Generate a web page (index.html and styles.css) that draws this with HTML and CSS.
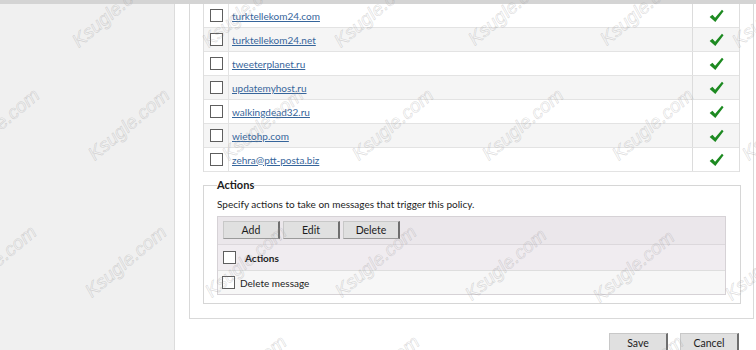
FILE: index.html
```html
<!DOCTYPE html>
<html>
<head>
<meta charset="utf-8">
<title>Policy</title>
<link rel="stylesheet" href="styles.css">
</head>
<body>
<div class="topbar"></div>
<div class="layout">
  <aside class="sidebar"></aside>
  <main class="main">
    <section class="panel">
      <div class="list">
        <div class="row"><div class="c-cb"><span class="cb"></span></div><div class="c-name"><a href="#">turktellekom24.com</a></div><div class="c-ok"><svg class="ok" viewBox="0 0 14 13"><path d="M0.6 7.4 L3.2 5.3 L5.7 8.1 L12.1 0.7 L13.6 2.1 L5.9 12.2 Z"/></svg></div></div>
        <div class="row"><div class="c-cb"><span class="cb"></span></div><div class="c-name"><a href="#">turktellekom24.net</a></div><div class="c-ok"><svg class="ok" viewBox="0 0 14 13"><path d="M0.6 7.4 L3.2 5.3 L5.7 8.1 L12.1 0.7 L13.6 2.1 L5.9 12.2 Z"/></svg></div></div>
        <div class="row"><div class="c-cb"><span class="cb"></span></div><div class="c-name"><a href="#">tweeterplanet.ru</a></div><div class="c-ok"><svg class="ok" viewBox="0 0 14 13"><path d="M0.6 7.4 L3.2 5.3 L5.7 8.1 L12.1 0.7 L13.6 2.1 L5.9 12.2 Z"/></svg></div></div>
        <div class="row"><div class="c-cb"><span class="cb"></span></div><div class="c-name"><a href="#">updatemyhost.ru</a></div><div class="c-ok"><svg class="ok" viewBox="0 0 14 13"><path d="M0.6 7.4 L3.2 5.3 L5.7 8.1 L12.1 0.7 L13.6 2.1 L5.9 12.2 Z"/></svg></div></div>
        <div class="row"><div class="c-cb"><span class="cb"></span></div><div class="c-name"><a href="#">walkingdead32.ru</a></div><div class="c-ok"><svg class="ok" viewBox="0 0 14 13"><path d="M0.6 7.4 L3.2 5.3 L5.7 8.1 L12.1 0.7 L13.6 2.1 L5.9 12.2 Z"/></svg></div></div>
        <div class="row"><div class="c-cb"><span class="cb"></span></div><div class="c-name"><a href="#">wietohp.com</a></div><div class="c-ok"><svg class="ok" viewBox="0 0 14 13"><path d="M0.6 7.4 L3.2 5.3 L5.7 8.1 L12.1 0.7 L13.6 2.1 L5.9 12.2 Z"/></svg></div></div>
        <div class="row"><div class="c-cb"><span class="cb"></span></div><div class="c-name"><a href="#">zehra@ptt-posta.biz</a></div><div class="c-ok"><svg class="ok" viewBox="0 0 14 13"><path d="M0.6 7.4 L3.2 5.3 L5.7 8.1 L12.1 0.7 L13.6 2.1 L5.9 12.2 Z"/></svg></div></div>
      </div>
      <fieldset class="actions">
        <legend>Actions</legend>
        <p class="hint">Specify actions to take on messages that trigger this policy.</p>
        <div class="grid">
          <div class="toolbar">
            <button class="btn">Add</button>
            <button class="btn">Edit</button>
            <button class="btn">Delete</button>
          </div>
          <div class="grid-head"><span class="cb"></span><span class="head-label">Actions</span></div>
          <div class="grid-row"><span class="cb"></span><span class="row-label">Delete message</span></div>
        </div>
      </fieldset>
    </section>
    <div class="footer">
      <button class="btn btn-lg">Save</button>
      <button class="btn btn-lg">Cancel</button>
    </div>
  </main>
</div>
<div class="watermarks" aria-hidden="true">
  <span class="wm" style="left:82px;top:30px">Ksugle.com</span>
  <span class="wm" style="left:212px;top:30px">Ksugle.com</span>
  <span class="wm" style="left:344px;top:30px">Ksugle.com</span>
  <span class="wm" style="left:478px;top:28px">Ksugle.com</span>
  <span class="wm" style="left:610px;top:28px">Ksugle.com</span>
  <span class="wm" style="left:742px;top:30px">Ksugle.com</span>
  <span class="wm" style="left:-32px;top:143px">Ksugle.com</span>
  <span class="wm" style="left:98px;top:143px">Ksugle.com</span>
  <span class="wm" style="left:232px;top:143px">Ksugle.com</span>
  <span class="wm" style="left:362px;top:143px">Ksugle.com</span>
  <span class="wm" style="left:492px;top:143px">Ksugle.com</span>
  <span class="wm" style="left:622px;top:143px">Ksugle.com</span>
  <span class="wm" style="left:752px;top:143px">Ksugle.com</span>
  <span class="wm" style="left:-35px;top:280px">Ksugle.com</span>
  <span class="wm" style="left:95px;top:280px">Ksugle.com</span>
  <span class="wm" style="left:215px;top:280px">Ksugle.com</span>
  <span class="wm" style="left:345px;top:280px">Ksugle.com</span>
  <span class="wm" style="left:475px;top:283px">Ksugle.com</span>
  <span class="wm" style="left:603px;top:285px">Ksugle.com</span>
  <span class="wm" style="left:735px;top:283px">Ksugle.com</span>
  <span class="wm" style="left:215px;top:390px">Ksugle.com</span>
  <span class="wm" style="left:348px;top:390px">Ksugle.com</span>
  <span class="wm" style="left:612px;top:390px">Ksugle.com</span>
</div>
</body>
</html>
```
FILE: styles.css
```css
* { box-sizing: border-box; }
html, body { margin: 0; padding: 0; }
body {
  width: 756px;
  height: 350px;
  overflow: hidden;
  position: relative;
  background: #ffffff;
  font-family: "Lato", "Liberation Sans", sans-serif;
  font-size: 10px;
  color: #1c1c1c;
}
.topbar { height: 4px; background: #d4d4d4; }
.layout { display: flex; height: 346px; }
.sidebar {
  flex: none;
  width: 175px;
  background: #f0f0f0;
  border-right: 1px solid #dcdcdc;
}
.main {
  flex: 1;
  display: flex;
  flex-direction: column;
  padding: 0 2px 0 14px;
}
.panel {
  border: 1px solid #d9d9d9;
  border-top: none;
  padding: 0 12px 14px 13px;
}
.list {
  width: 537px;
  border-left: 1px solid #dedede;
  border-right: 1px solid #dedede;
}
.row {
  display: grid;
  grid-template-columns: 25px 1fr 47px;
  height: 24px;
  border-bottom: 1px solid #e3e3e3;
}
.row:nth-child(even) { background: #f5f5f5; }
.c-cb {
  display: flex;
  align-items: center;
  justify-content: center;
  border-right: 1px solid #e3e3e3;
}
.c-name {
  display: flex;
  align-items: center;
  padding-left: 3px;
}
.c-name a { color: #36659b; text-decoration: underline; }
.c-ok {
  display: flex;
  align-items: center;
  justify-content: center;
  border-left: 1px solid #dcdcdc;
}
.ok { width: 15px; height: 14px; fill: #1d8a21; }
.cb {
  display: inline-block;
  flex: none;
  width: 13px;
  height: 13px;
  border: 1px solid #5e5e5e;
  background: #ffffff;
}
.actions {
  margin: 6px 0 0;
  padding: 0 14px 8px 13px;
  border: 1px solid #d6d6d6;
  min-width: 0;
}
.actions legend {
  padding: 0;
  font-size: 11px;
  font-weight: bold;
  line-height: 14px;
  color: #1c1c1c;
}
.hint { margin: 5px 0 0; line-height: 14px; }
.grid {
  margin-top: 5px;
  border: 1px solid #d6d2d6;
}
.toolbar {
  display: flex;
  gap: 3px;
  height: 27px;
  padding: 4px 5px 0;
  background: #ebe7eb;
}
.btn {
  width: 57px;
  height: 18px;
  padding: 0;
  font-family: inherit;
  font-size: 10.5px;
  color: #1c1c1c;
  background: #e0e0e0;
  border: 1px solid #c8c8c8;
  border-right: 2px solid #6e6e6e;
  border-bottom: 1px solid #9a9a9a;
  border-radius: 0;
}
.grid-head {
  display: flex;
  align-items: center;
  gap: 9px;
  height: 26px;
  padding-left: 5px;
  background: #f0ecf0;
  border-top: 1px solid #dcd8dc;
}
.head-label { font-weight: bold; }
.grid-row {
  display: flex;
  align-items: center;
  gap: 5px;
  height: 24px;
  padding-left: 4px;
  background: #f7f7f7;
  border-top: 1px solid #dedede;
}
.footer {
  display: flex;
  justify-content: flex-end;
  gap: 12px;
  margin-top: 14px;
  padding-right: 15px;
}
.btn-lg { width: 59px; height: 20px; }
.watermarks {
  position: absolute;
  inset: 0;
  overflow: hidden;
  pointer-events: none;
}
.wm {
  position: absolute;
  font-family: "Liberation Sans", sans-serif;
  font-style: italic;
  font-size: 19px;
  line-height: 22px;
  white-space: nowrap;
  color: transparent;
  -webkit-text-stroke: 0.6px rgba(150, 150, 150, 0.35);
  transform: rotate(-40deg);
  transform-origin: 0 100%;
}
```
